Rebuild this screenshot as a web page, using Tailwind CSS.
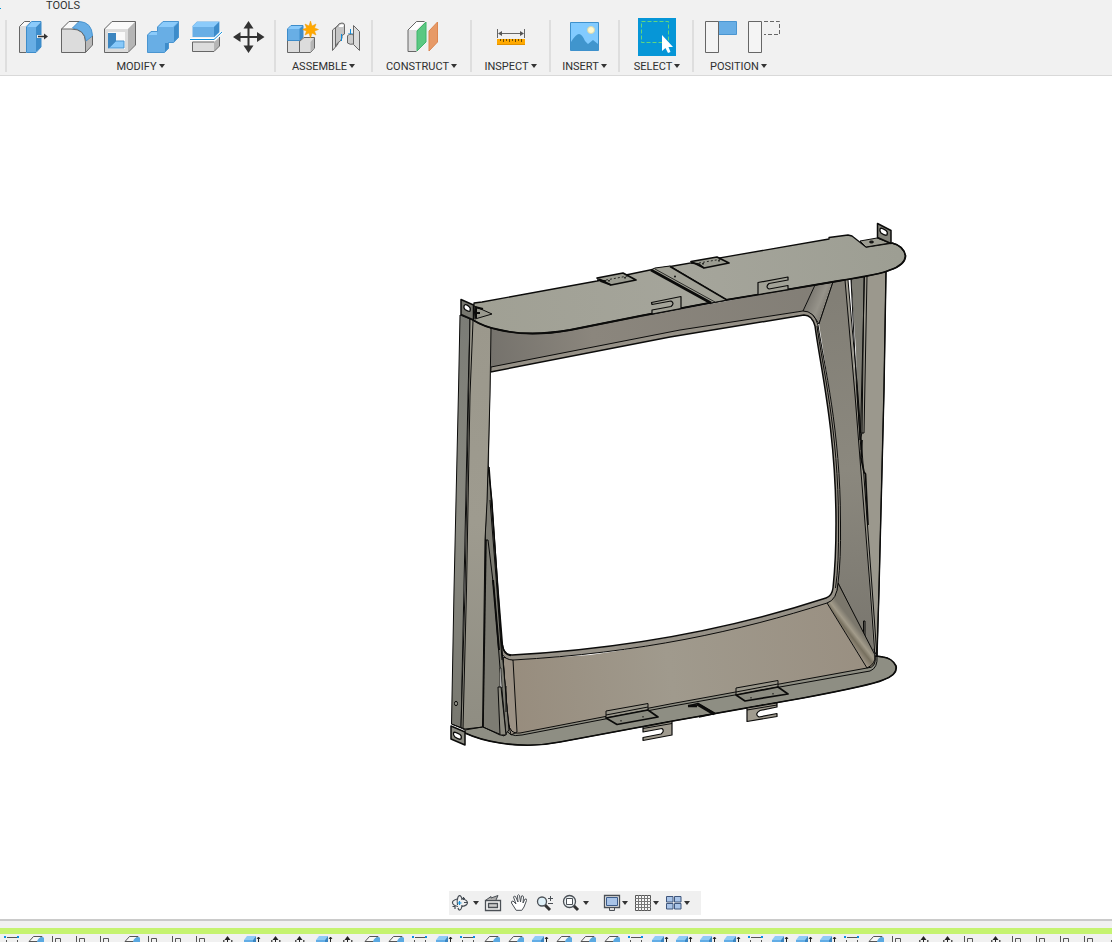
<!DOCTYPE html>
<html lang="en">
<head>
<meta charset="utf-8">
<meta name="viewport" content="width=device-width, initial-scale=1">
<title>Design workspace</title>
<script src="https://cdn.jsdelivr.net/npm/@tailwindcss/browser@4"></script>
</head>
<body class="flex h-screen flex-col overflow-hidden bg-white font-['Roboto',sans-serif] text-[11px] text-[#2f2f2f]">

<svg class="hidden" aria-hidden="true">
  <symbol id="caret" viewBox="0 0 6 4"><path d="M0 0H6L3 4Z" fill="#333"/></symbol>
  <symbol id="tl-s" viewBox="0 0 24 14"><path d="M7 1.500H17M6.500 4V14M17.500 4V14" stroke="#555" fill="none"/><path d="M4 0h2v2H4zM17 0h2v2H17z" fill="#0a8fe0"/></symbol>
  <symbol id="tl-p" viewBox="0 0 24 14"><path d="M9.500 .5H18L13.500 5.500H5Z" fill="#f7f7f7" stroke="#555"/><path d="M13 6Q14 1 19 1L20 2V14H12Z" fill="#5aa9e2"/></symbol>
  <symbol id="tl-j" viewBox="0 0 24 14"><path d="M4.500 0V14M7.500 14V2.500H12.500V14" stroke="#555" fill="none"/></symbol>
  <symbol id="tl-a" viewBox="0 0 24 14"><path d="M11.500 0L14.500 4H12V8H11V4H8.500Z" fill="#222"/><path d="M7 4h1.500v2H7zM15 4h1.500v2H15z" fill="#555"/></symbol>
  <symbol id="tl-b" viewBox="0 0 24 14"><path d="M4 4L7 0H16L13 4Z" fill="#8fcbf7"/><path d="M4 4H13V14H4Z" fill="#62ade6"/><path d="M13 4L16 0V14H13Z" fill="#3b86c2"/><path d="M18.500 14V1M17 3L18.500 1L20 3" stroke="#222" fill="none"/></symbol>
</svg>

<header class="shrink-0 border-b border-[#d9d9d9] bg-[#f1f1f1]">
  <nav class="flex h-[18px] items-start" aria-label="Workspace tabs">
    <span class="mt-2 h-px w-px bg-[#0696d7]"></span>
    <a href="#tools" class="ml-[45px] leading-3">TOOLS</a>
  </nav>
  <div class="flex h-[57px] items-start">
    <div class="ml-[5px] mt-0.5 h-[52px] w-0.5 shrink-0 bg-[#dedede]"></div>

    <section class="flex w-[267px] shrink-0 flex-col items-center">
      <div class="flex">
        <button aria-label="Press pull" class="flex w-[43px] justify-center"><svg class="size-[38px]" viewBox="14 18 38 38" fill="none"><path d="M19.500 26L24 21.500H31L26 27V52.500H19.500Z" fill="#dcdcdc"/><path d="M20 26L24.500 22H30L25.500 26Z" fill="#fafafa"/><path d="M26 52.500H19.500V26.500L24.500 21.500H30" stroke="#666"/><path d="M26 27L31 22H41L36 27Z" fill="#8bcbfb"/><path d="M36 27L41 22V47L36 52Z" fill="#3d8cca"/><path d="M26.500 27H36V52.500H26.500Z" fill="#68aee5"/><path d="M26.500 27L31.500 21.500H41V47L36 52.500H26.500Z" stroke="#3d8cca"/><path d="M37 36.500H44.500" stroke="#f1f1f1" stroke-width="3"/><path d="M38 36.500H45" stroke="#333" stroke-width="1.500"/><path d="M44 33.500L48 36.500L44 39.500Z" fill="#333"/></svg></button>
        <button aria-label="Fillet" class="flex w-[43px] justify-center"><svg class="size-[38px]" viewBox="57 18 38 38" fill="none"><path d="M61.500 29L69 21.500H77Q91 23 92.500 36V45L85.500 52.500H61.500Z" fill="#dcdcdc"/><path d="M62 29L69 22H78L73 27L71 29Z" fill="#fafafa"/><path d="M86 41L92 36V45L86 52Z" fill="#b9b9b9"/><path d="M72.500 28L79 21.500Q92 22 92.500 36L86 41Q85 30 72.500 28Z" fill="#68aee5" stroke="#4a95d0"/><path d="M61.500 52.500V29L69 21.500H79M61.500 29H71Q85 29 85.500 42V52.500H61.500M85.500 52.500L92.500 45V36" stroke="#666"/></svg></button>
        <button aria-label="Shell" class="flex w-[43px] justify-center"><svg class="size-[38px]" viewBox="100 18 38 38" fill="none"><path d="M104.500 29L112 21.500H135.500V45L128 52.500H104.500Z" fill="#dcdcdc"/><path d="M105 29L112 22H135L128 29Z" fill="#fafafa"/><path d="M128 29L135 22V45L128 52Z" fill="#b5b5b5"/><path d="M108 32H125V49H108Z" fill="#fafafa"/><path d="M108 33H116V41L108 49Z" fill="#3d86c0"/><path d="M109 48L116 41H124V48Z" fill="#88c9fa" stroke="#4a95d0"/><path d="M104.500 29L112 21.500H135.500V45L128 52.500H104.500Z" stroke="#666"/></svg></button>
        <button aria-label="Combine" class="flex w-[43px] justify-center"><svg class="size-[38px]" viewBox="143 18 38 38" fill="none"><path d="M147.500 35L151 31.500H157.500V27L163 21.500H179V37L174 42.500H169V48L164.500 52.500H147.500Z" fill="#68aee5"/><path d="M158 27L163 22H178L173 27ZM148 35L151.500 32H157V35Z" fill="#8bcbfb"/><path d="M174 27L179 22V37L174 42ZM165 43H169V48L165 52Z" fill="#3d8cca"/><path d="M147.500 35L151 31.500H157.500V27L163 21.500H178.500V37L173.500 42.500H168.500V48L164.500 52.500H147.500Z" stroke="#4a95d0"/></svg></button>
        <button aria-label="Split body" class="flex w-[43px] justify-center"><svg class="size-[38px]" viewBox="186 18 38 38" fill="none"><path d="M192.500 26L197 21.500H219.500V33L215 37H192.500Z" fill="#68aee5"/><path d="M192 27L197 22H219L214 27Z" fill="#8bcbfb"/><path d="M214 27L219 22V32L214 37Z" fill="#3d8cca"/><path d="M192.500 42H214L219.500 37.500V46L214 51.500H192.500Z" fill="#dcdcdc"/><path d="M214 42L219 38V46L214 51Z" fill="#b5b5b5"/><path d="M192.500 42V51.500H214L219.500 46V37M192.500 42H214" stroke="#666"/><path d="M190 39.500H214L222 32" stroke="#fff" stroke-width="3"/><path d="M190 39.500H214L222 32" stroke="#1591dc"/></svg></button>
        <button aria-label="Move" class="flex w-[43px] justify-center"><svg class="size-[38px]" viewBox="229 18 38 38" fill="none"><path d="M248.500 25V49M237 37H260" stroke="#333" stroke-width="2"/><path d="M248.500 21L253.500 28.500H243.500ZM248.500 53L253.500 45.500H243.500ZM233 37L240.500 32V42ZM264.500 37L257 32V42Z" fill="#333"/></svg></button>
      </div>
      <button class="flex h-[19px] items-center gap-0.5 pt-1">MODIFY<svg class="mb-1 h-1 w-1.5"><use href="#caret"/></svg></button>
    </section>
    <div class="mt-0.5 h-[52px] w-0.5 shrink-0 bg-[#dedede]"></div>

    <section class="flex w-[95px] shrink-0 flex-col items-center">
      <div class="flex">
        <button aria-label="New component" class="flex w-[43px] justify-center"><svg class="size-[38px]" viewBox="283 18 38 38" fill="none"><path d="M287.500 40H299.500V52.500H287.500Z" fill="#dcdcdc" stroke="#666"/><path d="M299.500 41.500L304 37.500H314.500V48L310.500 52.500H299.500Z" fill="#dcdcdc" stroke="#666"/><path d="M310.500 42L314 38V48L310.500 52Z" fill="#b5b5b5"/><path d="M287.500 29L291 25.500H303V37L299.500 40.500H287.500Z" fill="#68aee5" stroke="#3d8cca"/><path d="M288 29L291 26H302L299 29Z" fill="#8bcbfb"/><path d="M299.500 29L303 26V37L299.500 40Z" fill="#3d8cca"/><path d="M310.500 21L312 26L316 24L314.500 28L318.500 29.500L314.500 31L316 35L312 33L310.500 38L309 33L305 35L306.500 31L302.500 29.500L306.500 28L305 24L309 26Z" fill="#ffa800" stroke="#f09a00" stroke-width=".5"/></svg></button>
        <button aria-label="Joint" class="flex w-[43px] justify-center"><svg class="size-[38px]" viewBox="326 18 38 38" fill="none"><path d="M332.500 30L338 25.500V44L332.500 50.500Z" fill="#dcdcdc" stroke="#666"/><path d="M335.500 28L337.500 26Q338.500 23 342 23Q344.500 23 344.500 25V34L342 35.500V38Q341 41.500 337.500 43L335.500 47Z" fill="#c5c5c5" stroke="#666"/><path d="M339 26Q341 23 344 25L343 27H339Z" fill="#fff"/><path d="M341.500 34V41M350.500 29V36M348.500 33L350.500 35L352.500 33" stroke="#0d8fe0"/><path d="M347.500 36Q349 33 353.500 35V44Q350 45 347.500 43Z" fill="#ccc" stroke="#666"/><path d="M353.500 25.500L359.500 31.500V50.500L353.500 44.500Z" fill="#dcdcdc" stroke="#666"/></svg></button>
      </div>
      <button class="flex h-[19px] items-center gap-0.5 pt-1">ASSEMBLE<svg class="mb-1 h-1 w-1.5"><use href="#caret"/></svg></button>
    </section>
    <div class="mt-0.5 h-[52px] w-0.5 shrink-0 bg-[#dedede]"></div>

    <section class="flex w-[97px] shrink-0 flex-col items-center">
      <button aria-label="Construct plane"><svg class="size-[38px]" viewBox="402.5 18 38 38" fill="none"><path d="M407.500 30L416 21.500H424.500V42L415 51.500H407.500Z" fill="#ddd"/><path d="M408 30L416 22H424L416 30Z" fill="#fff"/><path d="M416 51.500H407.500V30L416 21.500H424" stroke="#666"/><path d="M416.500 31L425.500 22V42L416.500 51Z" fill="#5bc882" stroke="#3fb46b"/><path d="M428.500 31L437 22V42L428.500 51Z" fill="#e79a67" stroke="#dc8650"/></svg></button>
      <button class="flex h-[19px] items-center gap-0.5 pt-1">CONSTRUCT<svg class="mb-1 h-1 w-1.5"><use href="#caret"/></svg></button>
    </section>
    <div class="mt-0.5 h-[52px] w-0.5 shrink-0 bg-[#dedede]"></div>

    <section class="flex w-[77px] shrink-0 flex-col items-center">
      <button aria-label="Measure"><svg class="size-[38px]" viewBox="492 18 38 38" fill="none"><path d="M497.500 29V38M524.500 29V38M500 33.500H522" stroke="#666"/><path d="M498 33.500L502 31V36ZM524 33.500L520 31V36Z" fill="#555"/><path d="M497 39H525V45H497Z" fill="#ffa900"/><path d="M497 44.500H525" stroke="#e29100"/><path d="M500.500 39V41M503.500 39V42M506.500 39V41M509.500 39V42M512.500 39V41M515.500 39V42M518.500 39V41M521.500 39V42" stroke="#704d00"/></svg></button>
      <button class="flex h-[19px] items-center gap-0.5 pt-1">INSPECT<svg class="mb-1 h-1 w-1.5"><use href="#caret"/></svg></button>
    </section>
    <div class="mt-0.5 h-[52px] w-0.5 shrink-0 bg-[#dedede]"></div>

    <section class="flex w-[67px] shrink-0 flex-col items-center">
      <button aria-label="Insert image"><svg class="size-[38px]" viewBox="566 18 38 38" fill="none"><path d="M570.500 22.500H598.500V50.500H570.500Z" fill="#82cbff"/><path d="M571 42Q576 34 579 34T585 41L588 44L593 40L598 44V50H571Z" fill="#4095cd"/><circle cx="591" cy="30" r="3.500" fill="#fff8cf" stroke="#d8d8ae"/><path d="M570.500 22.500H598.500V50.500H570.500Z" stroke="#3e91cc"/></svg></button>
      <button class="flex h-[19px] items-center gap-0.5 pt-1">INSERT<svg class="mb-1 h-1 w-1.5"><use href="#caret"/></svg></button>
    </section>
    <div class="mt-0.5 h-[52px] w-0.5 shrink-0 bg-[#dedede]"></div>

    <section class="flex w-[72px] shrink-0 flex-col items-center pl-0.5">
      <button aria-label="Select" aria-pressed="true" class="bg-[#0696d7]"><svg class="size-[38px]" viewBox="638 18 38 38" fill="none"><path d="M641.500 21.500H668.500V42.500H641.500Z" stroke="#62d67e" stroke-dasharray="4 2"/><path d="M662 35V51L665.500 48L668 53L670.500 52L668.500 47H673Z" fill="#fff"/></svg></button>
      <button class="flex h-[19px] items-center gap-0.5 pt-1">SELECT<svg class="mb-1 h-1 w-1.5"><use href="#caret"/></svg></button>
    </section>
    <div class="mt-0.5 h-[52px] w-0.5 shrink-0 bg-[#dedede]"></div>

    <section class="flex w-[97px] shrink-0 flex-col items-center">
      <div class="flex">
        <button aria-label="Capture position" class="flex w-[43px] justify-center"><svg class="size-[38px]" viewBox="702 18 38 38" fill="none"><path d="M718.500 21.500H736.500V34.500H718.500Z" fill="#68aee5" stroke="#4a95d0"/><path d="M705.500 21.500H718.500V52.500H705.500Z" fill="#f4f4f4" stroke="#666"/></svg></button>
        <button aria-label="Revert position" class="flex w-[43px] justify-center"><svg class="size-[38px]" viewBox="745 18 38 38" fill="none"><path d="M764 21.500H779.500V34.500H764" stroke="#666" stroke-dasharray="4 2"/><path d="M748.500 21.500H761.500V52.500H748.500Z" fill="#f4f4f4" stroke="#666"/></svg></button>
      </div>
      <button class="mr-2 flex h-[19px] items-center gap-0.5 pt-1">POSITION<svg class="mb-1 h-1 w-1.5"><use href="#caret"/></svg></button>
    </section>
  </div>
</header>

<main class="flex min-h-0 flex-1 flex-col">
  <svg class="min-h-0 w-full flex-1" viewBox="0 76 1112 815" fill="none" stroke="#0b0b0a" stroke-linejoin="round" role="img" aria-label="Sheet metal frame model">
    <defs>
      <linearGradient id="topin" x1="490" y1="350" x2="830" y2="290" gradientUnits="userSpaceOnUse"><stop stop-color="#75726c"/><stop offset=".3" stop-color="#8b867d"/><stop offset="1" stop-color="#827e76"/></linearGradient>
      <linearGradient id="botin" x1="505" y1="690" x2="870" y2="640" gradientUnits="userSpaceOnUse"><stop stop-color="#978c7d"/><stop offset=".45" stop-color="#a09a8d"/><stop offset="1" stop-color="#998f81"/></linearGradient>
      <linearGradient id="rightin" x1="820" y1="300" x2="860" y2="640" gradientUnits="userSpaceOnUse"><stop stop-color="#827f76"/><stop offset=".5" stop-color="#8b887e"/><stop offset="1" stop-color="#7a776f"/></linearGradient>
      <linearGradient id="fold" x1="806" y1="295" x2="830" y2="305" gradientUnits="userSpaceOnUse"><stop stop-color="#75726b"/><stop offset=".6" stop-color="#96938a"/><stop offset="1" stop-color="#77746c"/></linearGradient>
      <linearGradient id="fold2" x1="846" y1="640" x2="859" y2="630" gradientUnits="userSpaceOnUse"><stop stop-color="#a2988a"/><stop offset=".4" stop-color="#77705f"/><stop offset=".65" stop-color="#a29b8a"/><stop offset="1" stop-color="#7b776c"/></linearGradient>
      <linearGradient id="colL" x1="0" y1="315" x2="0" y2="730" gradientUnits="userSpaceOnUse"><stop stop-color="#7b7c76"/><stop offset=".5" stop-color="#8a8a81"/><stop offset="1" stop-color="#77776f"/></linearGradient>
      <linearGradient id="colR" x1="0" y1="315" x2="0" y2="730" gradientUnits="userSpaceOnUse"><stop stop-color="#9b988c"/><stop offset=".5" stop-color="#9e9b8f"/><stop offset="1" stop-color="#8f8d82"/></linearGradient>
      <linearGradient id="plate" x1="480" y1="310" x2="900" y2="250" gradientUnits="userSpaceOnUse"><stop stop-color="#a0a094"/><stop offset=".5" stop-color="#a5a59b"/><stop offset="1" stop-color="#9d9e93"/></linearGradient>
    </defs>

    <!-- bottom plate -->
    <path d="M465 728L500 710L860 655L883 657Q892 658 896 666Q898 675 883 680Q872 685 803 698L670 721.500L560 742Q530 748 500 743Q480 740 465 733Z" fill="#8e8e83"/>
    <path d="M877 656L883 657Q892 658 896 666Q898 675 883 680Q872 685 803 698L670 721.500L560 742Q530 748 500 743Q480 740 465 733" stroke-width="1.700"/>
    <!-- right column -->
    <path d="M843 279L886 271L884 390L879 590L877 656L868 640Z" fill="#9b988d"/>
    <path d="M851 279L864 276L862 433L860 440Z" fill="#7d7c73"/>
    <path d="M848 280H851L856 350L857 395Z" fill="#fff" stroke="none"/>
    <path d="M886 272L884 390L879 590L877 656" stroke-width="1.400"/>
    <path d="M867 276L864 433H861.500M864.500 276L861.500 395L860.500 433M851 280L857 395L861 450"/>
    <!-- interior faces -->
    <path d="M490 329L560 331L815 285L803 311L680 331L491 368Z" fill="url(#topin)" stroke="none"/>
    <path d="M815 285L833 282L819 324L813 315L803 311Z" fill="url(#fold)"/>
    <path d="M833 282L845 280L857 410L874 656L838 583L841 523L838 460L831 400L819 324Z" fill="url(#rightin)" stroke="none"/>
    <path d="M833 282L819 324M838 583L874 656"/>
    <path d="M845 280L855 395L870 587L875 657M848 280L858 395L872 587L877 657"/>
    <path d="M862 440L861 458L864 472L865.500 474L868 525" stroke-width="1.700"/>
    <path d="M865 653V621H863.500V646"/>
    <path d="M503 657L513 660L590 655Q700 640 827 603L867 668L670 704L518 734Q508 734 508 727Z" fill="url(#botin)" stroke="none"/>
    <path d="M827 603Q837 598 838 583L875 655Q877 668 867 668Z" fill="url(#fold2)"/>
    <path d="M503 657L513 660L517 732L511 735Q507 720 503 657" fill="#9b9184"/>
    <!-- outer fold of the lower lip -->
    <path d="M503 658L508 722Q510 735 520 733L670 704L867 668Q876 664 875 655"/>
    <path d="M499 660L505 726Q507 738 522 735L670 706.500L870 671Q878 668 877 656"/>
    <!-- rim round the opening -->
    <path fill="#969187" d="M491 367L680 330L803 311Q814 311 818 325C824 365 840.500 430 840.500 523Q841 560 838 583Q837 600 827 603C740 631 640 653 513 660Q506 660 502 654L488 466Z"/>
    <path d="M817 326C822 365 838.500 430 838.500 523Q839 565 835.500 588"/>
    <path fill="#fff" stroke="none" d="M490.500 372L670 337L804 315Q812 315 815 326C820 365 836 430 836 523Q836 560 833 588Q832 596 826 598C740 626 640 648 512 655Q504 655 502.500 645L498 590L489 467Z"/>
    <path d="M490.500 372L670 337L804 315Q812 315 815 326C820 365 836 430 836 523Q836 560 833 588Q832 596 826 598C740 626 640 648 512 655Q504 655 502.500 645" stroke-width="1.500"/>
    <!-- left side panel -->
    <path d="M488 466L492 500L498 590L502 650L509 730L504 736L483 727L485 540Z" fill="#7d7c73"/>
    <path d="M486 540L483 727" stroke-width="1.500"/>
    <path d="M489 467L498 590L502.500 646Q504 655 511 655.500" stroke-width="1.500"/>
    <path d="M488 540L494 590L500 668L506 735M490 500L497 590L502 660M488 540H485V502H487"/>
    <path d="M493 580L499 650" stroke-width="2"/>
    <path d="M500 668V687L502 688L501 668Z" fill="#fff" stroke-width=".7"/>
    <path d="M498 687L500 735H506L501 687ZM506 686V712" fill="#8d8b80"/>
    <!-- left column -->
    <path d="M460 315L470 319L468 395L461 728L451.500 724L454 590L458.500 390Z" fill="url(#colL)"/>
    <path d="M470 319L491 328L490 395L488 467L487 502L485 540L482.500 727L465 730L461 728L465 590Z" fill="url(#colR)"/>
    <path d="M473 321L470 395L466.500 590L463 728"/>
    <path d="M451.500 724L465 729L483 727L500 735"/>
    <ellipse cx="456" cy="703.500" rx="1.500" ry="2.200" fill="#99998f"/>

    <!-- top plate -->
    <path d="M474 303L482 302L597 281L650 270L829 239V237.500L848 235L852 236L866 247L892 243Q904 246 905.500 256Q905 265 890 270Q882 274 838 281L720 301L640 316L570 330Q530 337 500 330Q484 327 473 320Z" fill="url(#plate)" stroke-width="1.300"/>
    <path d="M892 243Q904 246 905.500 256Q905 265 890 270Q882 274 838 281L720 301L640 316L570 330Q530 337 500 330Q484 327 473 320" stroke-width="1.800"/>
    <!-- centre strap -->
    <path d="M651 270L655 268L670 266L727 300L711 303Z" fill="#a1a196"/>
    <path d="M651 270L711 303" stroke-width="2.600"/><path d="M670 266.500L727 300" stroke-width="1.500"/>
    <path d="M655 269L715 302" stroke-width=".8"/><circle cx="675" cy="276.500" r="1" fill="#111" stroke="none"/>
    <!-- hinges on the top edge -->
    <path d="M597 278L623 273L636 280L611 285Z" fill="#9b9c91" stroke-width="1.700"/>
    <path d="M597 280L606 281M600 281L611 285" stroke-width="1.500"/><path d="M606 280L628 276" stroke-width=".8" stroke-dasharray="2 2"/><path d="M609 280v1.500M625 277v1.500" stroke-width="1.500"/>
    <path d="M691 261.500L717 257L729 263L704 268Z" fill="#9b9c91" stroke-width="1.700"/>
    <path d="M691 263L699 264L704 268" stroke-width="1.500"/><path d="M699 263L722 259" stroke-width=".8" stroke-dasharray="2 2"/><path d="M703 263v1.500M719 260v1.500" stroke-width="1.500"/>
    <!-- slotted tabs on the front edge -->
    <path d="M651.500 302.500L681 296.500V308.500L652 314V310L671 306.500Q675 303 671 301L652 304.500Z" fill="#a1a196" stroke-width="1.200"/>
    <path d="M758 294V282.500L788 277V280L769 283.500Q765 287 769 289L788 285.500V289" fill="#a1a196" stroke-width="1.200"/>
    <!-- upper corner brackets -->
    <path d="M474 306L492 314L475 319Z" fill="#99998e"/><path d="M475 307L483 309M475 313H480M476 308V318" stroke-width="2"/>
    <path d="M461 299.500L473.500 305V320L461 314.500Z" fill="#77776f" stroke-width="1.500"/>
    <path d="M464 306Q465 303 469 306.500Q471 308 470 311Q469 312 465 309.500Q463.500 308 464 306Z" fill="#fff" stroke-width="1.300"/>
    <path d="M860 241L877 238L890 243L866 247Z" fill="#9d9d92"/><ellipse cx="871.500" cy="242" rx="2" ry="1" fill="#222"/>
    <path d="M877.500 223.500L891 230.500V243.500L877.500 237.500Z" fill="#828279" stroke-width="1.500"/>
    <path d="M880 229Q881 227 886 230.500Q888 232 887 235Q885 236 881 233Q879.500 231 880 229Z" fill="#fff" stroke-width="1.300"/>
    <!-- lower corner bracket -->
    <path d="M451 726L465 732V745L451 739Z" fill="#8b8b82" stroke-width="1.500"/>
    <path d="M453.500 733Q454 731 460 734.500Q462 736 461 739Q459 740 455 737Q453 735 453.500 733Z" fill="#fff" stroke-width="1.300"/>
    <!-- lower hinges -->
    <path d="M606 711L648 703.500V710L606 718Z" fill="#99968a"/><path d="M606 718L648 710L658 717L617 724.500Z" fill="#8b8b80" stroke-width="1.700"/><path d="M606 715L648 707M621 720v1.500M643 716v1.500"/>
    <path d="M736 688L778 680.500V687L736 695Z" fill="#99968a"/><path d="M736 695L778 687L788 694L745 701Z" fill="#8b8b80" stroke-width="1.700"/><path d="M736 692L778 684M751 697v1.500M773 693v1.500"/>
    <!-- centre clip -->
    <path d="M688 706L698 703.500L715 713.500L699 717" stroke-width="1.500"/><path d="M697 704L714 714" stroke-width="3"/><path d="M688 706H697" stroke-width="2.500"/>
    <!-- lower slotted tabs -->
    <path d="M643 727L672 721.500V735L643 740.500V737.500L661 734Q665 731 662 728.500L643 732Z" fill="#a09b8f" stroke-width="1.200"/><path d="M643 728.500L672 723.500"/>
    <path d="M747 708L777 703V707L760 710.500Q754 714 759 717L777 713.500V716.500L747 721.500Z" fill="#a09b8f" stroke-width="1.200"/><path d="M747 710L777 705"/>
  </svg>

  <div class="mb-1 flex shrink-0 justify-center pl-[38px]">
    <div role="toolbar" aria-label="Navigation" class="flex h-6 items-center bg-[#f0f0f0] pl-0.5 pr-[10px]">
      <button aria-label="Orbit" class="flex items-center"><svg class="size-5" viewBox="451 893 20 20" fill="none" stroke="#454c54" stroke-width="1.200"><path d="M457 899Q452 900.500 452.500 903T458 906.500M462 906.500Q467.500 905.500 467.500 902.500Q467 900 463 899"/><path d="M457.500 905Q456.500 900 458 897Q459.500 894.500 461 896.500Q462 898 462 900M458 908Q459 911.500 461 909Q462 907.500 462 905"/><path d="M455 909V906.500H452.500"/><path d="M459.500 901V905M457.500 903H461.500" stroke="#1591dc"/><path d="M462 898.500H465M463.500 897V900M464 902.500H467"/></svg><svg class="mx-0.5 h-1 w-1.5"><use href="#caret"/></svg></button>
      <button aria-label="Look at" class="ml-0.5"><svg class="size-5" viewBox="483 893 20 20" fill="none" stroke="#4b5056"><path d="M485.500 900.500H500.500V910.500H485.500Z" fill="#f7f7f7" stroke-width="1.300"/><path d="M488.500 903.500H497.500V907.500H488.500Z" fill="#ccc" stroke-width="1.300"/><path d="M486 900L491 896.500V898L498 895.500L496 900" fill="#aaa"/></svg></button>
      <button aria-label="Pan" class="ml-1.5"><svg class="size-5" viewBox="509 893 20 20" fill="#fff" stroke="#4b5056" stroke-linecap="round" stroke-linejoin="round"><path d="M516 910L511.500 903Q511 901 513 901L516 904L513.500 897Q514 895.500 515.500 896.500L518 902L517.500 895.500Q518.500 894 519.500 895.500L520.500 902L521.500 896Q523 895 523.500 897L523 903L525 899Q527 898.500 526.500 900.500L524 907L522 910Z"/></svg></button>
      <button aria-label="Zoom" class="ml-1.5"><svg class="size-5" viewBox="535 893 20 20" fill="none" stroke="#4b5056"><path d="M545 905L550 910" stroke="#333" stroke-width="3"/><circle cx="542" cy="901.500" r="4.500" fill="#dff0f8" stroke-width="1.300"/><path d="M548 898.500H553M550.500 896V901M548 903.500H553"/></svg></button>
      <button aria-label="Fit" class="ml-1.5 flex items-center"><svg class="size-5" viewBox="561 893 20 20" fill="none" stroke="#4b5056"><path d="M573 905L578 910" stroke="#333" stroke-width="3"/><circle cx="569.500" cy="901.500" r="6" fill="#eef3f5" stroke-width="1.300"/><path d="M566.500 898.500H572.500V904.500H566.500Z" fill="#fff"/></svg><svg class="mx-0.5 h-1 w-1.5"><use href="#caret"/></svg></button>
      <button aria-label="Display settings" class="ml-3 flex items-center"><svg class="size-[18px]" viewBox="603 894 18 18" fill="none" stroke="#4b5056"><path d="M604.500 895.500H619.500V907.500H604.500Z" fill="#eee" stroke-width="1.300"/><path d="M606.500 897.500H617.500V905.500H606.500Z" fill="#a9c4e8" stroke="#3d5d8c"/><path d="M609.500 908V910.500H614.500V908" fill="#ddd"/></svg><svg class="mx-px h-1 w-1.5"><use href="#caret"/></svg></button>
      <button aria-label="Grid settings" class="ml-[5px] flex items-center"><svg class="size-[18px]" viewBox="634 894 18 18" fill="none" stroke="#777"><path d="M635.500 895.500H650.500V910.500H635.500Z" fill="#f7f7f7" stroke="#555"/><path d="M638.500 895V911M641.500 895V911M644.500 895V911M647.500 895V911M635 898.500H651M635 901.500H651M635 904.500H651M635 907.500H651"/></svg><svg class="mx-px h-1 w-1.5"><use href="#caret"/></svg></button>
      <button aria-label="Viewports" class="ml-[5px] flex items-center"><svg class="size-[18px]" viewBox="665 894 18 18" fill="#a9c4e8" stroke="#3f567c"><path d="M666.500 896.500H673V902H666.500ZM674.500 896.500H681V902H674.500ZM666.500 903.500H673V909H666.500ZM674.500 903.500H681V909H674.500Z"/></svg><svg class="mx-px h-1 w-1.5"><use href="#caret"/></svg></button>
    </div>
  </div>
</main>

<footer class="shrink-0 overflow-hidden border-t-2 border-[#cacaca] bg-[#f1f1f1] pt-[7px]">
  <div class="h-1.5 bg-[#c5f370]"></div>
  <div id="timeline" class="flex h-2 overflow-hidden pt-0.5" role="group" aria-label="Timeline"></div>
</footer>

<script>
  const names = { s: 'Sketch', p: 'Plane', j: 'Joint', a: 'Move', b: 'Extrude' };
  document.getElementById('timeline').innerHTML = [...'spjjjpjjjabaabappsbsppbpppsbbbbsbbbspjaajajjjja'].map(k =>
    `<button class="h-[14px] w-6 shrink-0" aria-label="${names[k]}"><svg class="h-[14px] w-6"><use href="#tl-${k}"/></svg></button>`).join('');
</script>
</body>
</html>
